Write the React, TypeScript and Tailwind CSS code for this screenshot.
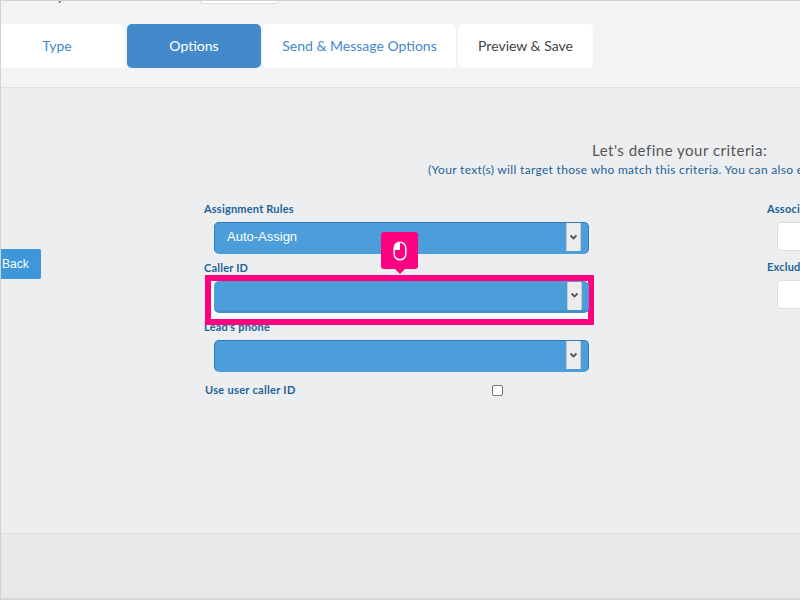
import React from 'react';

const tabBase = 'h-11 pb-[2px] flex items-center justify-center rounded-[5px] text-[14px]';

function Field({ label, value, highlighted }: { label: string; value?: string; highlighted?: boolean }) {
  return (
    <div className="h-[59px]">
      <div className="text-[11px] leading-[14px] tracking-[0.2px] font-bold text-[#1c6399] pl-[3px]">{label}</div>
      <div
        className={`relative z-10 mt-[6px] ml-[13px] w-[375px] h-8 rounded-[5px] bg-[#4b9ed9] border-b-[3px] flex items-center justify-between pr-[7px] ${
          highlighted ? 'border-[#3f90cb]' : 'border-t border-x border-[#2f7db8] border-b-[#4b9ed9]'
        }`}
      >
        <span className="pl-[12px] text-[13px] text-white font-['Liberation_Sans',sans-serif]">{value}</span>
        <span className="w-[15px] h-7 bg-[#ececec] border-x border-[#c9c9c9] flex items-center justify-center">
          <svg width="9" height="7" viewBox="0 0 9 7" fill="none">
            <path d="M1.5 1.5 4.5 4.5 7.5 1.5" stroke="#555" strokeWidth="1.8" />
          </svg>
        </span>
      </div>
    </div>
  );
}

function MouseIcon() {
  return (
    <svg width="14" height="20" viewBox="0 0 14 20" fill="none">
      <rect x="1.2" y="1.2" width="11.6" height="17.6" rx="5.8" stroke="#fff" strokeWidth="1.5" />
      <path d="M7 1.2A5.8 5.8 0 0 0 1.2 7v2H7Z" fill="#fff" />
    </svg>
  );
}

export default function App() {
  return (
    <div className="relative w-[800px] h-[600px] overflow-hidden flex flex-col border-l border-t border-[#cfd1d4] font-['Lato',sans-serif] bg-[#edeef0]">
      {/* Header with wizard tabs */}
      <div className="h-[87px] shrink-0 bg-[#f2f3f5] border-b border-[#e0e1e3]">
        <div className="h-[3px] flex overflow-visible">
          <div className="w-[199px] pl-[24px] -mt-[13px] text-[13px] leading-[16px] text-[#444]">Survey Name</div>
          <div className="w-[78px] h-[3px] bg-white border-x border-b border-[#ddd] rounded-b-[2px]" />
        </div>
        <div className="mt-5 -ml-[10px] flex gap-[2px]">
          <div className={`${tabBase} w-[134px] pr-[2px] shrink-0 bg-white text-[#4589ca]`}>Type</div>
          <div className={`${tabBase} w-[134px] shrink-0 bg-[#448acb] text-white`}>Options</div>
          <div className={`${tabBase} w-[193px] shrink-0 bg-white text-[#4589ca]`}>Send &amp; Message Options</div>
          <div className={`${tabBase} w-[135px] shrink-0 bg-white text-[#444]`}>Preview &amp; Save</div>
        </div>
      </div>

      {/* Form area */}
      <div className="h-[446px] shrink-0 border-b border-[#e0e1e3]">
        <div className="mt-[53px] ml-[591px] text-[15px] leading-[18px] tracking-[0.5px] text-[#555] whitespace-nowrap">
          Let's define your criteria:
        </div>
        <div className="mt-[3px] ml-[427px] text-[12px] leading-[16px] tracking-[0.32px] text-[#1c6399] whitespace-nowrap">
          (Your text(s) will target those who match this criteria. You can also exclude
        </div>
        <div className="mt-[24px] flex items-start">
          <div className="w-[40px] h-[30px] shrink-0 mt-[47px] bg-[#3e97d8] rounded-r-[2px] text-white text-[12px] flex items-center pl-[1px] font-['Liberation_Sans',sans-serif]">
            Back
          </div>
          <div className="ml-[160px] w-[390px] shrink-0">
            <Field label="Assignment Rules" value="Auto-Assign" />
            <Field label="Caller ID" highlighted />
            <Field label="Lead's phone" />
            <div className="mt-[3px] ml-[4px] flex items-center">
              <span className="w-[287px] text-[11px] tracking-[0.3px] font-bold text-[#1c6399]">Use user caller ID</span>
              <input type="checkbox" className="w-[11px] h-[11px] appearance-none bg-white border border-[#777] rounded-[2px]" />
            </div>
          </div>
          <div className="ml-[176px] shrink-0">
            <div className="text-[11px] leading-[14px] tracking-[0.2px] font-bold text-[#1c6399]">Associate</div>
            <div className="mt-[6px] ml-[10px] w-[60px] h-[29px] bg-white border border-[#ddd] rounded-[4px]" />
            <div className="mt-[9px] text-[11px] leading-[14px] tracking-[0.2px] font-bold text-[#1c6399]">Exclude</div>
            <div className="mt-[6px] ml-[10px] w-[60px] h-[29px] bg-white border border-[#ddd] rounded-[4px]" />
          </div>
        </div>
      </div>

      {/* Footer */}
      <div className="flex-1 bg-[#e9e9e9] border-b-2 border-[#d6d6d6]" />

      {/* Tutorial highlight behind the Caller ID select */}
      <div className="absolute left-[204px] top-[274px] w-[389px] h-[50px] bg-white border-[6px] border-[#ff0080] pointer-events-none" />
      <div className="absolute z-20 left-[380px] top-[231px] w-[37px] h-[37px] bg-[#ff0080] rounded-[3px] flex items-center justify-center">
        <MouseIcon />
        <div className="absolute left-[14px] -bottom-[5px] border-x-[5px] border-x-transparent border-t-[5px] border-t-[#ff0080]" />
      </div>
    </div>
  );
}
